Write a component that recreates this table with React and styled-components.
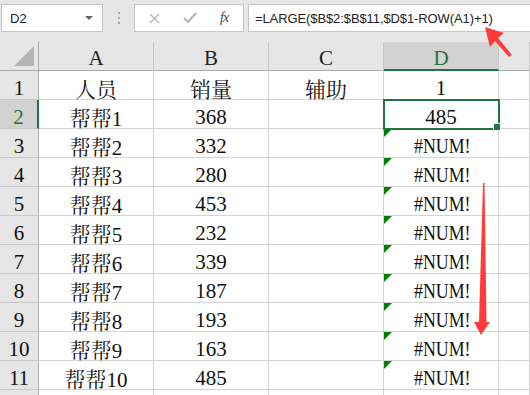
import React from 'react';
import styled, { createGlobalStyle } from 'styled-components';

const GlobalStyle = createGlobalStyle`
  html, body {
    margin: 0;
    padding: 0;
    background: #fff;
  }
  * {
    box-sizing: border-box;
  }
`;

const GREEN = '#217346';
const COLS = ['A', 'B', 'C', 'D'];

const rows = [
  ['人员', '销量', '辅助', '1'],
  ['帮帮1', '368', '', '485'],
  ['帮帮2', '332', '', '#NUM!'],
  ['帮帮3', '280', '', '#NUM!'],
  ['帮帮4', '453', '', '#NUM!'],
  ['帮帮5', '232', '', '#NUM!'],
  ['帮帮6', '339', '', '#NUM!'],
  ['帮帮7', '187', '', '#NUM!'],
  ['帮帮8', '193', '', '#NUM!'],
  ['帮帮9', '163', '', '#NUM!'],
  ['帮帮10', '485', '', '#NUM!'],
];

const Page = styled.div`
  position: relative;
  width: 530px;
  height: 395px;
  overflow: hidden;
  background: #fff;
`;

const FormulaBar = styled.div`
  display: flex;
  align-items: flex-start;
  height: 42px;
  padding: 4px 0 0 1px;
  background: #e6e6e6;
`;

const NameBox = styled.div`
  position: relative;
  display: flex;
  align-items: center;
  width: 102px;
  height: 28px;
  padding-left: 8px;
  background: #fff;
  border: 1px solid #c6c6c6;
  font: 13px 'Liberation Sans', Arial, sans-serif;
  color: #222;
`;

const Caret = styled.span`
  position: absolute;
  right: 9px;
  top: 11px;
  width: 0;
  height: 0;
  border-left: 4px solid transparent;
  border-right: 4px solid transparent;
  border-top: 4px solid #666;
`;

const Grip = styled.div`
  display: flex;
  flex-direction: column;
  gap: 3px;
  width: 31px;
  padding: 8px 0 0 15px;
  span {
    width: 2px;
    height: 2px;
    background: #a6a6a6;
  }
`;

const ButtonBox = styled.div`
  display: flex;
  align-items: center;
  width: 110px;
  height: 28px;
  background: #fff;
  border: 1px solid #c6c6c6;
  padding-left: 14px;
  gap: 23px;
`;

const Fx = styled.span`
  font: italic 14px 'Liberation Serif', 'Times New Roman', serif;
  color: #444;
  letter-spacing: -1px;
`;

const FormulaInput = styled.div`
  flex: 1;
  height: 28px;
  margin-left: 4px;
  margin-right: -10px;
  padding: 0 0 0 6px;
  display: flex;
  align-items: center;
  background: #fff;
  border: 1px solid #c6c6c6;
  font: 13px 'Liberation Sans', Arial, sans-serif;
  letter-spacing: -0.1px;
  color: #222;
  white-space: nowrap;
`;

const Grid = styled.div`
  display: grid;
  grid-template-columns: 39px 115px 115px 115px 115px 1fr;
  grid-template-rows: 29px repeat(11, 29px) 1fr;
  font: 21px 'Liberation Serif', 'Noto Serif CJK SC', 'Noto Sans CJK SC', serif;
  color: #111;
`;

const HeadCell = styled.div`
  position: relative;
  display: flex;
  align-items: center;
  justify-content: center;
  background: ${({ $active }) => ($active ? '#d2d2d2' : '#e6e6e6')};
  color: ${({ $active }) => ($active ? GREEN : '#222')};
  border-right: 1px solid #c8c8c8;
  border-bottom: ${({ $active }) => ($active ? `2px solid ${GREEN}` : '1px solid #ababab')};
  padding-top: ${({ $active }) => ($active ? '6px' : '5px')};
`;

const Corner = styled(HeadCell)`
  border-right: 1px solid #ababab;
  &::after {
    content: '';
    position: absolute;
    right: 4px;
    bottom: 4px;
    width: 0;
    height: 0;
    border-left: 20px solid transparent;
    border-bottom: 20px solid #b4b4b4;
  }
`;

const RowHead = styled.div`
  display: flex;
  align-items: center;
  justify-content: center;
  white-space: nowrap;
  padding-top: 6px;
  background: ${({ $active }) => ($active ? '#d2d2d2' : '#e6e6e6')};
  color: ${({ $active }) => ($active ? GREEN : '#111')};
  border-bottom: 1px solid #c8c8c8;
  border-right: ${({ $active }) => ($active ? `2px solid ${GREEN}` : '1px solid #ababab')};
`;

const Cell = styled.div`
  position: relative;
  display: flex;
  align-items: center;
  justify-content: center;
  white-space: nowrap;
  padding-top: 6px;
  border-right: 1px solid #d4d4d4;
  border-bottom: 1px solid #d4d4d4;
`;

const ActiveCell = styled(Cell)`
  outline: 2px solid ${GREEN};
  outline-offset: -1px;
  z-index: 1;
  &::after {
    content: '';
    position: absolute;
    right: -3px;
    bottom: -3px;
    width: 6px;
    height: 6px;
    background: ${GREEN};
    border: 1px solid #fff;
  }
`;

const ErrorText = styled.span`
  display: inline-block;
  transform: scaleX(0.85);
  margin-left: 2px;
`;

const ErrorFlag = styled.span`
  position: absolute;
  left: 0;
  top: 0;
  width: 0;
  height: 0;
  border-top: 8px solid #008000;
  border-right: 8px solid transparent;
`;

const Arrows = styled.svg`
  position: absolute;
  left: 0;
  top: 0;
  pointer-events: none;
`;

const Cross = () => (
  <svg width="11" height="11" viewBox="0 0 11 11">
    <path d="M1 1L10 10M10 1L1 10" stroke="#b4b4b4" strokeWidth="1.3" />
  </svg>
);

const Check = () => (
  <svg width="14" height="12" viewBox="0 0 14 12">
    <path d="M1 6L5 10L13 1" stroke="#b4b4b4" strokeWidth="2" fill="none" />
  </svg>
);

const App = () => (
  <Page>
    <GlobalStyle />
    <FormulaBar>
      <NameBox>
        D2
        <Caret />
      </NameBox>
      <Grip>
        <span />
        <span />
        <span />
      </Grip>
      <ButtonBox>
        <Cross />
        <Check />
        <Fx>fx</Fx>
      </ButtonBox>
      <FormulaInput>=LARGE($B$2:$B$11,$D$1-ROW(A1)+1)</FormulaInput>
    </FormulaBar>

    <Grid>
      <Corner />
      {COLS.map((c) => (
        <HeadCell key={c} $active={c === 'D'}>
          {c}
        </HeadCell>
      ))}
      <HeadCell />
      {rows.map((r, i) => (
        <React.Fragment key={i}>
          <RowHead $active={i === 1}>{i + 1}</RowHead>
          {r.map((v, j) => {
            if (j === 3 && i === 1) return <ActiveCell key={j}>{v}</ActiveCell>;
            if (v === '#NUM!') {
              return (
                <Cell key={j}>
                  <ErrorFlag />
                  <ErrorText>{v}</ErrorText>
                </Cell>
              );
            }
            return <Cell key={j}>{v}</Cell>;
          })}
          <Cell />
        </React.Fragment>
      ))}
      <RowHead />
      <Cell />
      <Cell />
      <Cell />
      <Cell />
      <Cell />
    </Grid>

    <Arrows width="530" height="395" viewBox="0 0 530 395">
      <path
        d="M485 27 L504 33 L498 38 L512 55 L509 57 L495 41 L490 47 Z"
        fill="#ff3b3b"
      />
      <path
        d="M483 183 L484.5 183 L486.5 322 L490 322 L481 335 L474 322 L479 322 Z"
        fill="#ff3b3b"
      />
    </Arrows>
  </Page>
);

export default App;
